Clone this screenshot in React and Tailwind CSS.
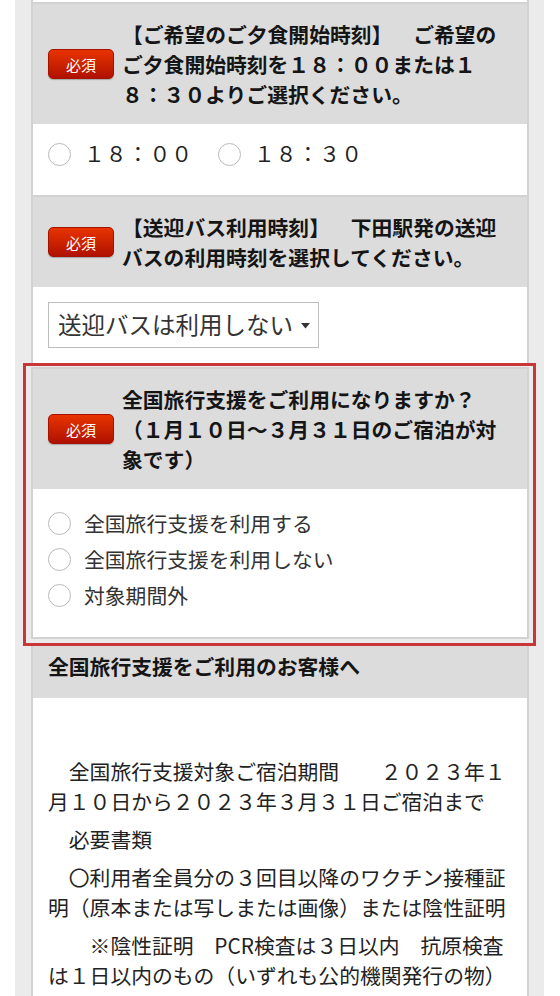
import React from "react";

const FONT = { fontFamily: '"Noto Sans CJK JP", "Noto Sans", sans-serif' };
const S = "\u3000";

function Badge() {
  return (
    <div className="flex h-[30px] w-[66px] shrink-0 items-center justify-center rounded-[5px] border border-[#a51300] bg-gradient-to-b from-[#e83300] to-[#b01000] text-[15px] leading-none text-white shadow-[0_1px_1px_rgba(0,0,0,0.25)]">
      必須
    </div>
  );
}

function Radio() {
  return (
    <div className="h-[23px] w-[23px] shrink-0 rounded-full border-[1.5px] border-[#b9b9b9] bg-white" />
  );
}

function Header({ children }) {
  return (
    <div className="flex items-center gap-[8px] bg-[#dcdcdc] py-[15px] pl-[15px]">
      <Badge />
      <div className="whitespace-pre text-[20.8px] font-bold leading-[30px] text-[#151515]">
        {children}
      </div>
    </div>
  );
}

export default function App() {
  return (
    <div className="min-h-[996px] overflow-hidden bg-white" style={FONT}>
      <div className="ml-[15px] min-h-[996px] w-[529px] bg-[#ebebeb] pl-[16px] pr-[15px]">
        <div className="min-h-[996px] border-x-2 border-[#d2d2d2] bg-white">
          <div className="box-content h-[2px] border-b-2 border-[#d2d2d2] bg-white" />

          <Header>
            {"【ご希望のご夕食開始時刻】\u3000\u2002ご希望の"}
            <br />
            ご夕食開始時刻を１８：００または１
            <br />
            ８：３０よりご選択ください。
          </Header>
          <div className="border-b-2 border-[#d2d2d2] pb-[23px] pl-[15px] pt-[12px]">
            <div className="flex h-9 items-center text-[20.8px] tracking-[1px] text-[#222]">
              <Radio />
              <span className="ml-[13px]">１８：００</span>
              <span className="ml-[25px] flex items-center">
                <Radio />
                <span className="ml-[13px]">１８：３０</span>
              </span>
            </div>
          </div>

          <Header>
            {"【送迎バス利用時刻】\u3000\u2002下田駅発の送迎"}
            <br />
            バスの利用時刻を選択してください。
          </Header>
          <div className="pb-[15px] pl-[15px] pt-[15px]">
            <div className="flex h-[46px] w-[271px] items-center justify-between border border-[#bdbdbd] bg-white pl-[9px] pr-[8px] text-[23.5px] text-[#333]">
              <span className="whitespace-nowrap leading-none">送迎バスは利用しない</span>
              <svg width="9" height="6" viewBox="0 0 9 6" className="mt-[2px]">
                <path d="M0 0 L9 0 L4.5 5.5 Z" fill="#333" />
              </svg>
            </div>
          </div>

          <div className="ml-[-10px] mr-[-9px] border-[3px] border-[#c8363a] bg-[#ebebeb] pb-[4px] pl-[5px] pr-[4px] pt-[1px]">
            <div className="border-2 border-[#d2d2d2] bg-white">
              <Header>
                全国旅行支援をご利用になりますか？
                <br />
                （１月１０日～３月３１日のご宿泊が対
                <br />
                象です）
              </Header>
              <div className="pb-[24px] pl-[15px] pt-[16px] text-[20.8px] text-[#333]">
                {["全国旅行支援を利用する", "全国旅行支援を利用しない", "対象期間外"].map((t) => (
                  <div key={t} className="flex h-9 items-center">
                    <Radio />
                    <span className="ml-[13px] whitespace-nowrap leading-none">{t}</span>
                  </div>
                ))}
              </div>
            </div>
          </div>

          <div className="bg-[#dcdcdc] pb-[17px] pl-[15px] pt-[5px] text-[20.8px] font-bold leading-[30px] text-[#151515]">
            全国旅行支援をご利用のお客様へ
          </div>
          <div className="whitespace-pre pl-[15px] pt-[58px] text-[20.8px] leading-[30px] text-[#222]">
            <p>
              {S + "全国旅行支援対象ご宿泊期間" + S + S + "２０２３年１"}
              <br />
              {"月１０日から２０２３年３月３１日ご宿泊まで"}
            </p>
            <p className="mt-[8px]">{S + "必要書類"}</p>
            <p className="mt-[8px]">
              {S + "〇利用者全員分の３回目以降のワクチン接種証"}
              <br />
              {"明（原本または写しまたは画像）または陰性証明"}
            </p>
            <p className="mt-[8px]">
              {S + S + "※陰性証明" + S + "PCR検査は３日以内" + S + "抗原検査"}
              <br />
              {"は１日以内のもの（いずれも公的機関発行の物）"}
            </p>
          </div>
        </div>
      </div>
    </div>
  );
}
